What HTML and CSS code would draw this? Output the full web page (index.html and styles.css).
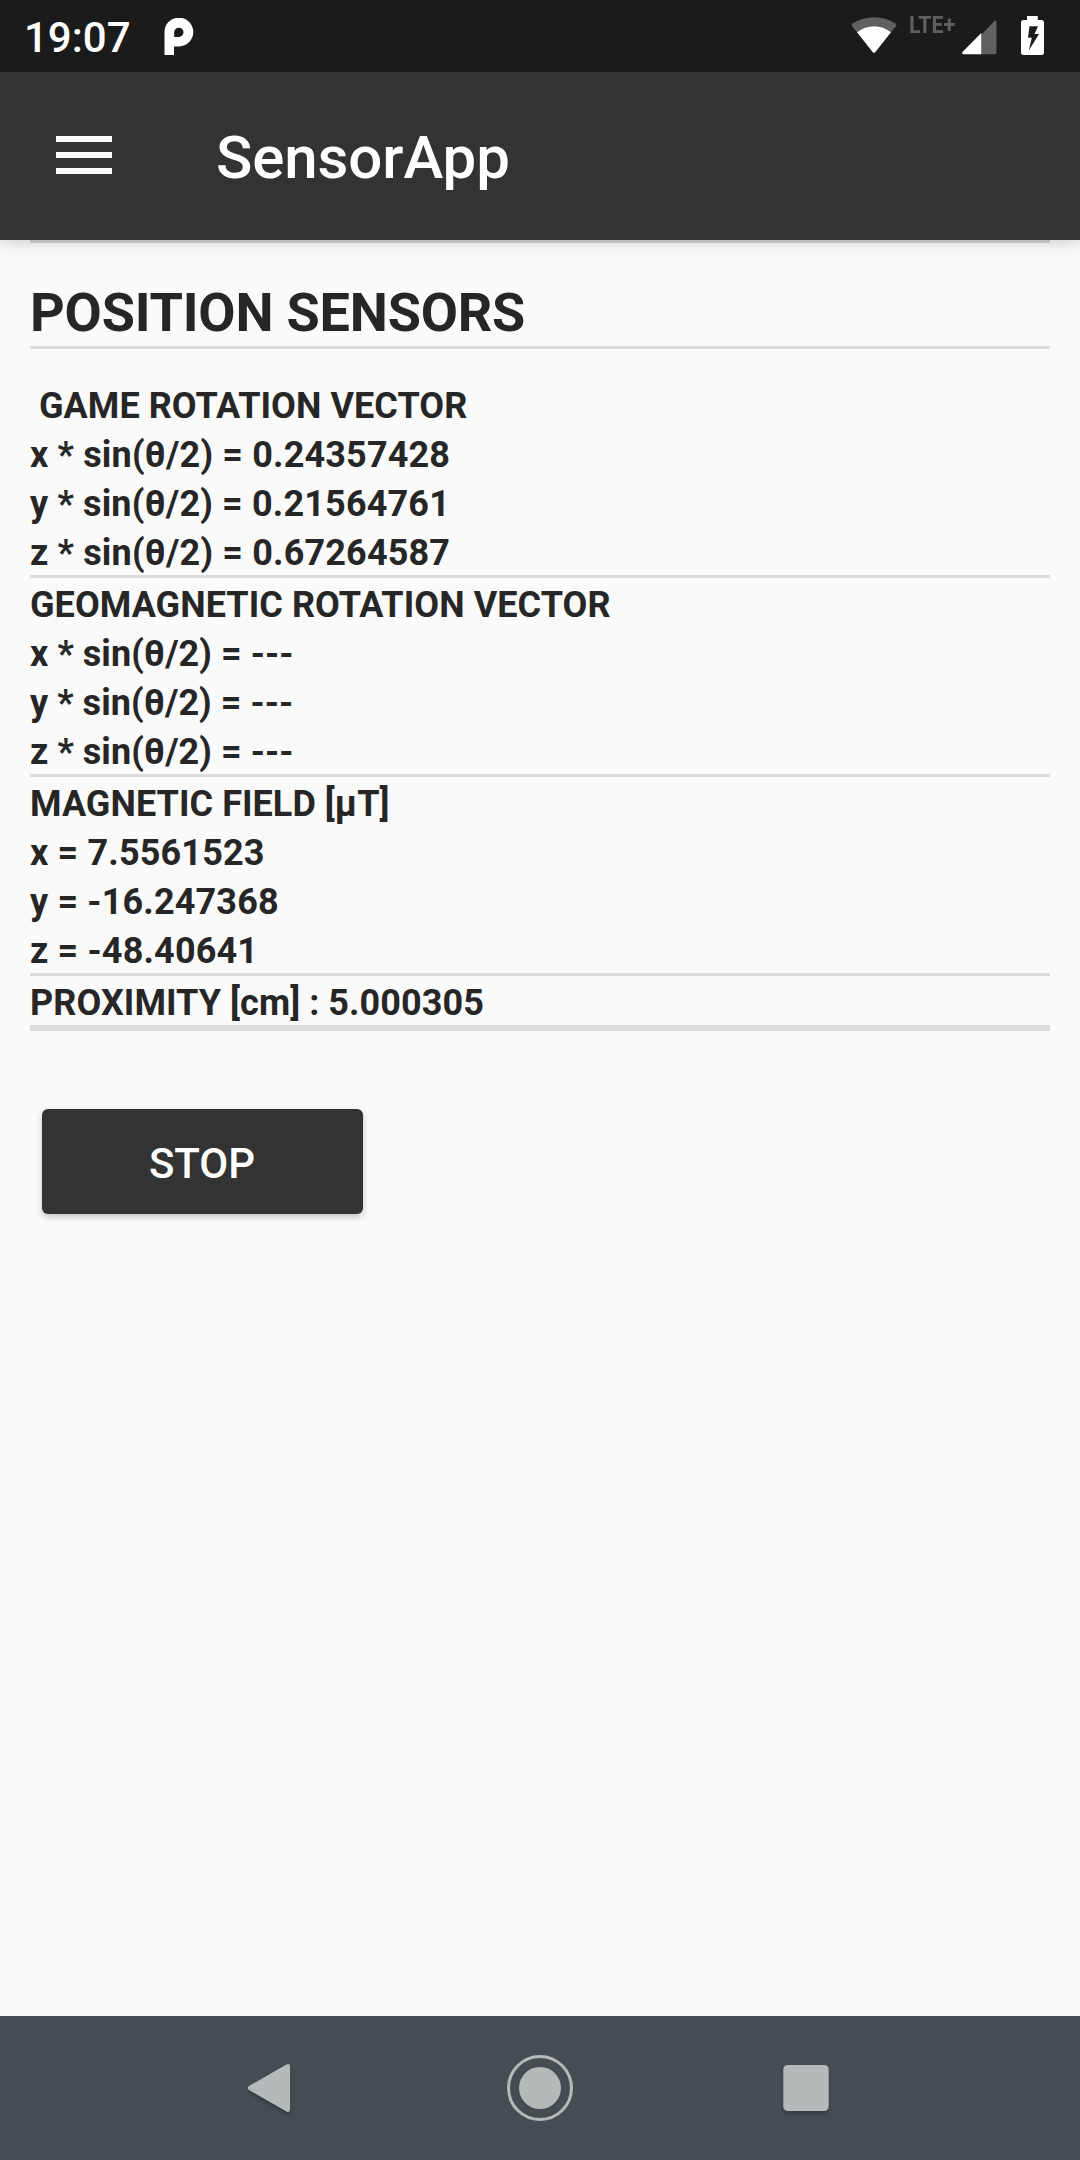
FILE: index.html
```html
<!DOCTYPE html>
<html lang="en">
<head>
<meta charset="utf-8">
<title>SensorApp</title>
<link rel="stylesheet" href="styles.css">
</head>
<body>
<header class="status">
  <span class="clock">19:07</span>
  <svg class="p-icon" width="30" height="38" viewBox="0 0 30 38"><path fill="#fff" fill-rule="evenodd" d="M.5 37V14.400A14.400 14.400 0 1 1 15 28.400H10V37ZM14.900 9.700A4.600 4.600 0 0 0 10.200 14.300V18.900H14.900A4.600 4.600 0 0 0 14.900 9.700Z"/></svg>
  <span class="spacer"></span>
  <svg class="wifi" width="46" height="37" viewBox="0 0 46 37"><path fill="#606060" d="M1.200 9.500Q-.3 7.800 1.800 6.300Q11 .2 23 .2T44.200 6.300Q46.300 7.800 44.800 9.500L40 15.300Q32 9.400 23 9.400T6 15.300Z"/><path fill="#fff" d="M6 15.300Q13.500 9.200 23 9.200T40 15.300L24.400 35Q23 36.700 21.600 35Z"/></svg>
  <span class="lte">LTE+</span>
  <svg class="signal" width="35" height="35" viewBox="0 0 35 35"><path fill="#606060" d="M19.300 14.800L32 1.500Q34.500-.5 34.500 2V32.500Q34.500 34.200 32.800 34.200H19.300Z"/><path fill="#fff" d="M19.300 13V34.200H1.800Q-.7 34.200.7 31.800Z"/></svg>
  <svg class="battery" width="23" height="39" viewBox="0 0 23 39"><path fill="#fff" fill-rule="evenodd" d="M6 0H16.800V4H20.500Q23 4 23 6.500V36.500Q23 39 20.500 39H2.500Q0 39 0 36.500V6.500Q0 4 2.500 4H6ZM8.500 10.300L7 21.800H10.800L7.800 34.500L18 18H13.500L17 10.300Z"/></svg>
</header>
<div class="appbar">
  <svg class="menu" width="56" height="38" viewBox="0 0 56 38"><path fill="#fff" d="M0 0H56V6H0ZM0 16H56V22H0ZM0 32H56V38H0Z"/></svg>
  <h1 class="title">SensorApp</h1>
</div>
<main class="content">
  <hr class="line line-top">
  <h2 class="heading">POSITION SENSORS</h2>
  <hr class="line">
  <section class="group group-first">
    <p class="row">&nbsp;GAME ROTATION VECTOR</p>
    <p class="row value">x * sin(θ/2) = 0.24357428</p>
    <p class="row value">y * sin(θ/2) = 0.21564761</p>
    <p class="row value">z * sin(θ/2) = 0.67264587</p>
  </section>
  <hr class="line">
  <section class="group">
    <p class="row">GEOMAGNETIC ROTATION VECTOR</p>
    <p class="row">x * sin(θ/2) = ---</p>
    <p class="row">y * sin(θ/2) = ---</p>
    <p class="row">z * sin(θ/2) = ---</p>
  </section>
  <hr class="line">
  <section class="group">
    <p class="row">MAGNETIC FIELD [µT]</p>
    <p class="row value">x = 7.5561523</p>
    <p class="row value">y = -16.247368</p>
    <p class="row value">z = -48.40641</p>
  </section>
  <hr class="line">
  <section class="group">
    <p class="row">PROXIMITY [cm] : 5.000305</p>
  </section>
  <hr class="line line-thick">
  <button class="stop">STOP</button>
</main>
<nav class="nav">
  <svg class="nav-icon" width="72" height="72" viewBox="0 0 72 72"><path fill="#b5b9ba" d="M11 38Q8.500 36 11 34L48.500 12.600Q52 11 52 14.500V57.500Q52 61 48.500 59.400Z"/></svg>
  <svg width="72" height="72" viewBox="0 0 72 72"><circle cx="36" cy="36" r="31.500" fill="none" stroke="#b5b9ba" stroke-width="3"/><circle cx="36" cy="36" r="21" fill="#b5b9ba"/></svg>
  <svg class="nav-icon" width="72" height="72" viewBox="0 0 72 72"><rect x="13.300" y="13" width="45.400" height="46" rx="4.500" fill="#b5b9ba"/></svg>
</nav>
</body>
</html>
```
FILE: styles.css
```css
* { box-sizing: border-box; }
body {
  margin: 0;
  height: 2160px;
  display: flex;
  flex-direction: column;
  background: #fafafa;
  color: #262626;
  font-family: Roboto, "Liberation Sans", sans-serif;
}
.status {
  height: 72px;
  flex: none;
  display: flex;
  align-items: flex-start;
  background: #1b1b1b;
  color: #fff;
  padding: 0 36px 0 24px;
}
.clock { font-size: 42px; font-weight: 500; line-height: 50px; padding-top: 13px; width: 140px; }
.p-icon { margin-top: 18px; }
.spacer { flex: 1; }
.wifi { margin: 17px 12px 0 0; }
.lte {
  font-size: 24px;
  font-weight: 700;
  line-height: 28px;
  padding-top: 11px;
  width: 53px;
  color: #606060;
  transform: scaleX(.89);
  transform-origin: left;
}
.signal { margin: 20px 24px 0 0; }
.battery { margin-top: 16px; }
.appbar {
  height: 168px;
  flex: none;
  display: flex;
  align-items: flex-start;
  gap: 104px;
  padding: 0 56px;
  background: #333;
  color: #fff;
  box-shadow: 0 2px 15px rgba(0, 0, 0, .19);
  position: relative;
}
.menu { margin-top: 64px; }
.title { margin: 51px 0 0; font-size: 60px; font-weight: 500; line-height: 70px; letter-spacing: -.1px; }
.content { flex: 1; padding: 0 30px; }
.line { height: 3px; margin: 0; border: 0; background: #dcdcdc; }
.line-top { background: #d6d6d6; }
.line-thick { height: 6px; }
.heading { margin: 0; padding: 38px 0 1px; font-size: 54px; font-weight: 700; line-height: 64px; letter-spacing: -.2px; }
.group-first { padding-top: 30px; }
.row { margin: 0; padding-top: 5px; font-size: 36px; font-weight: 700; line-height: 44px; letter-spacing: .06px; }
.value { letter-spacing: .16px; }
.stop {
  display: block;
  width: 321px;
  height: 105px;
  margin: 78px 0 0 12px;
  padding: 5px 1px 0 0;
  border: 0;
  border-radius: 6px;
  background: #333;
  color: #fff;
  font: 500 42px/50px Roboto, "Liberation Sans", sans-serif;
  box-shadow: 0 3px 6px rgba(0, 0, 0, .22);
}
.nav {
  height: 144px;
  flex: none;
  display: flex;
  justify-content: center;
  align-items: center;
  gap: 194px;
  background: #454d53;
}
.nav-icon { filter: drop-shadow(0 3px 1.5px rgba(0, 0, 0, .2)); }
```
